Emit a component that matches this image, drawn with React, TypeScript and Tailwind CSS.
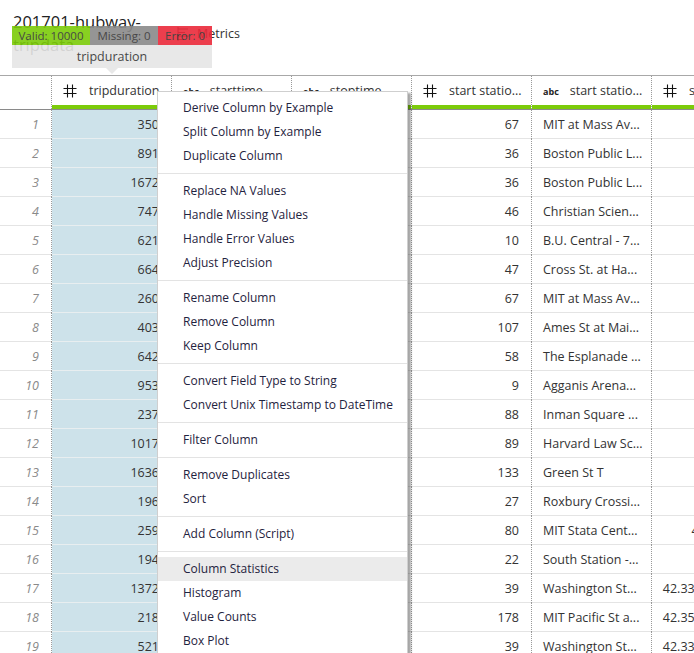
import React from "react";

const Hash = () => (
  <svg width="14" height="14" viewBox="0 0 14 14" className="shrink-0">
    <path d="M4.5 0.5V13.5M9.5 0.5V13.5M0.5 4.5H13.5M0.5 9.5H13.5" stroke="#111" strokeWidth="1.1" fill="none" />
  </svg>
);

const Abc = () => (
  <span className="shrink-0 text-[9px] font-bold leading-none text-[#222]">abc</span>
);

const rows: [number, string, string, string, string][] = [
  [1, "350", "67", "MIT at Mass Av...", "42.3581"],
  [2, "891", "36", "Boston Public L...", "42.3496"],
  [3, "1672", "36", "Boston Public L...", "42.3496"],
  [4, "747", "46", "Christian Scien...", "42.3446"],
  [5, "621", "10", "B.U. Central - 7...", "42.3505"],
  [6, "664", "47", "Cross St. at Ha...", "42.3628"],
  [7, "260", "67", "MIT at Mass Av...", "42.3581"],
  [8, "403", "107", "Ames St at Mai...", "42.3624"],
  [9, "642", "58", "The Esplanade ...", "42.3557"],
  [10, "953", "9", "Agganis Arena...", "42.3520"],
  [11, "237", "88", "Inman Square ...", "42.3743"],
  [12, "1017", "89", "Harvard Law Sc...", "42.3790"],
  [13, "1636", "133", "Green St T", "42.3105"],
  [14, "196", "27", "Roxbury Crossi...", "42.3314"],
  [15, "259", "80", "MIT Stata Cent...", "42.3621065"],
  [16, "194", "22", "South Station -...", "42.3522"],
  [17, "1372", "39", "Washington St...", "42.33287698231"],
  [18, "218", "178", "MIT Pacific St a...", "42.35957293512"],
  [19, "521", "39", "Washington St...", "42.33287698231"],
];

type MenuEntry = string | null;
const menu: MenuEntry[] = [
  "Derive Column by Example",
  "Split Column by Example",
  "Duplicate Column",
  null,
  "Replace NA Values",
  "Handle Missing Values",
  "Handle Error Values",
  "Adjust Precision",
  null,
  "Rename Column",
  "Remove Column",
  "Keep Column",
  null,
  "Convert Field Type to String",
  "Convert Unix Timestamp to DateTime",
  null,
  "Filter Column",
  null,
  "Remove Duplicates",
  "Sort",
  null,
  "Add Column (Script)",
  null,
  "Column Statistics",
  "Histogram",
  "Value Counts",
  "Box Plot",
];

const headers: { icon: "hash" | "abc"; label: string }[] = [
  { icon: "hash", label: "tripduration" },
  { icon: "abc", label: "starttime" },
  { icon: "abc", label: "stoptime" },
  { icon: "hash", label: "start statio..." },
  { icon: "abc", label: "start statio..." },
  { icon: "hash", label: "start statio..." },
];

export default function App() {
  return (
    <div className="relative w-[694px] h-[653px] overflow-hidden bg-white font-['Open_Sans',sans-serif] text-[#333]">
      {/* top title area */}
      <div className="flex items-start h-[75px] pl-[13px] pt-[10px]">
        <div className="w-[150px] text-[16.5px] leading-[23px] text-[#222]">201701-hubway-tripdata</div>
        <div className="flex items-center gap-[7px] mt-[15px] ml-[14px] text-[12.5px] text-[#333]">
          <svg width="13" height="16" viewBox="0 0 13 16">
            <path d="M1 1V15M1 3H11M1 6.5H8M1 10H12M1 13.5H7" stroke="#333" strokeWidth="1" fill="none" />
          </svg>
          <span>Metrics</span>
        </div>
      </div>

      {/* table */}
      <div className="border-t border-[#a8a8a8] w-[800px]">
        <div className="flex h-[34px] border-b border-[#8a8a8a]">
          <div className="w-[52px] shrink-0 border-r border-dotted border-[#999]" />
          {headers.map((h, i) => (
            <div key={i} className="w-[120px] shrink-0 flex flex-col border-r border-dotted border-[#999]">
              <div
                className={`flex-1 flex items-center pt-[1px] pl-[11px] pr-[6px] text-[12.5px] text-[#333] whitespace-nowrap overflow-hidden ${
                  h.icon === "hash" ? "gap-[12px]" : "gap-[11px]"
                }`}
              >
                {h.icon === "hash" ? <Hash /> : <Abc />}
                <span>{h.label}</span>
              </div>
              <div className="h-[4px] bg-[#7ccb0a]" />
            </div>
          ))}
        </div>
        {rows.map((r) => (
          <div key={r[0]} className="flex h-[29px] text-[12.5px]">
            <div className="w-[52px] shrink-0 border-r border-dotted border-[#999] flex">
              <div className="flex-1 flex items-center justify-end pr-[12px] pt-[2px] italic text-[#8a8a8a] border-b border-[#e4e4e4]">{r[0]}</div>
            </div>
            <div className="w-[120px] shrink-0 border-r border-dotted border-[#999] flex">
              <div className="flex-1 flex items-center justify-end pr-[12px] pt-[2px] bg-[#cde2ea] border-b border-[#e8eef0] text-[#333]">{r[1]}</div>
            </div>
            <div className="w-[120px] shrink-0 border-r border-dotted border-[#999] flex">
              <div className="flex-1 border-b border-[#e4e4e4]" />
            </div>
            <div className="w-[120px] shrink-0 border-r border-dotted border-[#999] flex">
              <div className="flex-1 border-b border-[#e4e4e4]" />
            </div>
            <div className="w-[120px] shrink-0 border-r border-dotted border-[#999] flex">
              <div className="flex-1 flex items-center justify-end pr-[12px] pt-[2px] border-b border-[#e4e4e4]">{r[2]}</div>
            </div>
            <div className="w-[120px] shrink-0 border-r border-dotted border-[#999] flex">
              <div className="flex-1 flex items-center pl-[11px] pt-[2px] whitespace-nowrap overflow-hidden border-b border-[#e4e4e4]">{r[3]}</div>
            </div>
            <div className="w-[120px] shrink-0 border-r border-dotted border-[#999] flex">
              <div className="flex-1 flex items-center justify-end pr-[12px] pt-[2px] whitespace-nowrap overflow-hidden border-b border-[#e4e4e4]">{r[4]}</div>
            </div>
          </div>
        ))}
      </div>

      {/* tooltip */}
      <div className="absolute left-[12px] top-[26px] w-[200px] opacity-90">
        <div className="flex h-[19px] text-[11.5px] leading-[19px] text-[#333]">
          <div className="w-[78px] bg-[#7ccb0a] text-center">Valid: 10000</div>
          <div className="w-[68px] bg-[#8a8a8a] text-center">Missing: 0</div>
          <div className="flex-1 bg-[#ea2a3a] text-center">Error: 0</div>
        </div>
        <div className="h-[23px] bg-[#e6e6e6] text-center text-[12.5px] leading-[23px] text-[#333]">tripduration</div>
        <div className="mx-auto w-0 h-0 border-l-[6px] border-r-[6px] border-t-[6px] border-l-transparent border-r-transparent border-t-[#e6e6e6]" />
      </div>

      {/* context menu */}
      <div className="absolute left-[157px] top-[91px] w-[251px] bg-white border border-[#cfcfcf] shadow-[3px_2px_2px_rgba(0,0,0,0.35)] py-[4px] text-[12px] text-[#1f2340]">
        {menu.map((m, i) =>
          m === null ? (
            <div key={i} className="h-[11px] flex items-center">
              <div className="h-px w-full bg-[#e3e3e3]" />
            </div>
          ) : (
            <div
              key={i}
              className={`h-[24px] leading-[24px] pl-[25px] whitespace-nowrap ${m === "Column Statistics" ? "bg-[#ebebeb]" : ""}`}
            >
              {m}
            </div>
          )
        )}
      </div>
    </div>
  );
}
